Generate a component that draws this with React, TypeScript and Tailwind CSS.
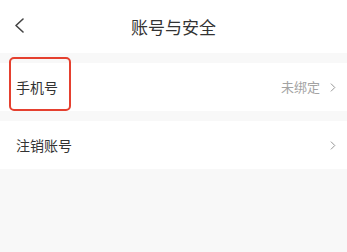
import type { JSX } from "react";

const FONT = { fontFamily: '"Noto Sans CJK SC", "Noto Sans", sans-serif' };

function Chevron({ left = false, className }: { left?: boolean; className?: string }): JSX.Element {
  return left ? (
    <svg viewBox="0 0 10 15" className={className} fill="none" stroke="currentColor" strokeWidth={1.6}>
      <path d="M9 1 L2 7.5 L9 14" strokeLinecap="round" strokeLinejoin="round" />
    </svg>
  ) : (
    <svg viewBox="0 0 6 10" className={className} fill="none" stroke="currentColor" strokeWidth={1}>
      <path d="M1 1 L5 5 L1 9" strokeLinecap="round" strokeLinejoin="round" />
    </svg>
  );
}

function Row({ label, value }: { label: string; value?: string }): JSX.Element {
  return (
    <div className="flex h-[48px] items-center bg-white pl-4 pr-[11px]">
      <span className="flex-1 text-[14px] text-[#333]">{label}</span>
      {value && <span className="mr-[10px] text-[13px] text-[#a3a3a3]">{value}</span>}
      <Chevron className="h-[9px] w-[6px] text-[#8a8a8a]" />
    </div>
  );
}

export default function App(): JSX.Element {
  return (
    <div style={FONT} className="relative flex h-[252px] w-[347px] flex-col bg-[#f8f8f8]">
      <header className="relative flex h-[53px] items-center justify-center bg-white">
        <button type="button" className="absolute left-[14px] top-[18px] text-[#444]">
          <Chevron left className="h-[15px] w-[10px]" />
        </button>
        <h1 className="text-[17px] text-[#333]">账号与安全</h1>
      </header>

      <div className="mt-[10px] flex flex-col gap-[10px]">
        <Row label="手机号" value="未绑定" />
        <Row label="注销账号" />
      </div>

      {/* annotation box round the phone row */}
      <div className="pointer-events-none absolute left-[9px] top-[57px] h-[54px] w-[62px] rounded-[5px] border-2 border-[#e5402f]" />
    </div>
  );
}
